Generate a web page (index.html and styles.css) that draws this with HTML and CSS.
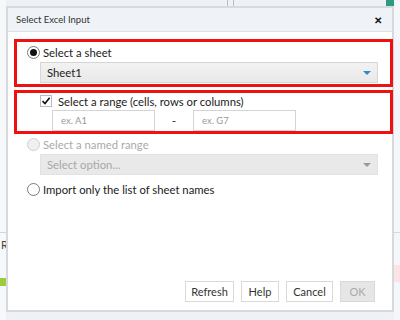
FILE: index.html
```html
<!DOCTYPE html>
<html>
<head>
<meta charset="utf-8">
<link rel="stylesheet" href="styles.css">
</head>
<body>
<div class="backdrop">
  <div class="bg-lines"></div>
  <div class="bg-teal"></div>
  <div class="bg-left">
    <div class="bg-sep"></div>
    <div class="bg-r">R</div>
    <div class="bg-green"></div>
  </div>
  <div class="bg-right">
    <div class="bg-sep"></div>
    <div class="bg-pink"></div>
  </div>
</div>
<div class="dialog">
  <div class="header">
    <span class="title">Select Excel Input</span>
    <span class="close">&#x2715;</span>
  </div>
  <div class="content">
    <div class="hl hl-sheet">
      <label class="opt">
        <span class="radio checked"></span>
        <span class="lbl">Select a sheet</span>
      </label>
      <div class="select">
        <span>Sheet1</span>
        <span class="caret"></span>
      </div>
    </div>
    <div class="hl hl-range">
      <label class="opt">
        <span class="check">
          <svg width="10" height="10" viewBox="0 0 10 10"><path d="M1.5 5.2 L4 7.6 L8.6 1.8" fill="none" stroke="#111" stroke-width="1.6"/></svg>
        </span>
        <span class="lbl">Select a range (cells, rows or columns)</span>
      </label>
      <div class="range">
        <div class="input">ex. A1</div>
        <span class="dash">-</span>
        <div class="input">ex. G7</div>
      </div>
    </div>
    <div class="plain">
      <label class="opt disabled">
        <span class="radio"></span>
        <span class="lbl">Select a named range</span>
      </label>
      <div class="select disabled">
        <span>Select option...</span>
        <span class="caret"></span>
      </div>
      <label class="opt opt-last">
        <span class="radio"></span>
        <span class="lbl">Import only the list of sheet names</span>
      </label>
    </div>
    <div class="spacer"></div>
    <div class="buttons">
      <button class="btn btn-refresh">Refresh</button>
      <button class="btn btn-help">Help</button>
      <button class="btn btn-cancel">Cancel</button>
      <button class="btn btn-disabled">OK</button>
    </div>
  </div>
</div>
</body>
</html>
```

FILE: styles.css
```css
html, body {
  margin: 0;
  padding: 0;
}
body {
  width: 400px;
  height: 320px;
  background: #eef1f5;
  font-family: "Lato", "Open Sans", sans-serif;
  color: #222;
  position: relative;
  overflow: hidden;
}
.backdrop {
  position: absolute;
  inset: 0;
}
.bg-lines {
  position: absolute;
  left: 227px;
  top: 0;
  width: 5px;
  height: 6px;
  border-left: 1px solid #b9bdc2;
  border-right: 1px solid #b9bdc2;
}
.bg-teal {
  position: absolute;
  left: 386px;
  top: 0;
  width: 14px;
  height: 7px;
  background: #2e9a82;
}
.bg-left {
  position: absolute;
  left: 0;
  top: 0;
  width: 6px;
  height: 320px;
  background: #f7f8fa;
}
.bg-left .bg-sep {
  position: absolute;
  top: 232px;
  left: 0;
  width: 6px;
  border-top: 1px solid #cfd6e0;
}
.bg-r {
  position: absolute;
  top: 238px;
  left: 1px;
  font-size: 11px;
  color: #444;
}
.bg-green {
  position: absolute;
  top: 278px;
  left: 0;
  width: 6px;
  height: 8px;
  background: #9ccc3c;
}
.bg-right {
  position: absolute;
  right: 0;
  top: 0;
  width: 6px;
  height: 320px;
  background: #f4f6f9;
}
.bg-right .bg-sep {
  position: absolute;
  top: 232px;
  left: 0;
  width: 6px;
  border-top: 1px solid #d3dae3;
}
.bg-pink {
  position: absolute;
  top: 265px;
  left: 0;
  width: 6px;
  height: 17px;
  background: #fbe3e6;
}
.dialog {
  position: absolute;
  left: 6px;
  top: 6px;
  width: 384px;
  height: 302px;
  border: 2px solid #d6d9dd;
  background: #fff;
  display: flex;
  flex-direction: column;
}
.header {
  height: 23px;
  background: #eff2f6;
  border-bottom: 1px solid #dde1e6;
  display: flex;
  align-items: center;
  justify-content: space-between;
  padding: 0 8px 0 8px;
}
.title {
  font-size: 9.5px;
  color: #333;
}
.close {
  font-size: 10px;
  font-weight: bold;
  color: #111;
  margin-right: 2px;
}
.content {
  flex: 1;
  display: flex;
  flex-direction: column;
  padding: 7px 0 8px 6px;
}
.hl {
  border: 3px solid #ee1111;
  margin-right: -1px;
}
.hl-sheet {
  height: 42px;
  padding: 0 0 0 10px;
}
.hl-range {
  margin-top: 3px;
  height: 38px;
  padding: 0 0 0 23px;
}
.opt {
  display: flex;
  align-items: center;
  gap: 3px;
  font-size: 11.3px;
  height: 20px;
}
.hl-range .opt {
  gap: 6px;
  margin-top: -2px;
}
.radio {
  width: 13px;
  height: 13px;
  border: 1px solid #7a7a7a;
  border-radius: 50%;
  box-sizing: border-box;
  display: inline-flex;
  align-items: center;
  justify-content: center;
  background: #fff;
}
.radio.checked::after {
  content: "";
  width: 7px;
  height: 7px;
  border-radius: 50%;
  background: #111;
}
.select {
  margin-left: 13px;
  margin-right: 12px;
  height: 21px;
  box-sizing: border-box;
  border: 1px solid #d6d6d6;
  background: linear-gradient(#f2f2f2, #e9e9e9);
  display: flex;
  align-items: center;
  justify-content: space-between;
  padding: 0 6px;
  font-size: 11.3px;
  color: #222;
}
.caret {
  width: 0;
  height: 0;
  border-left: 4px solid transparent;
  border-right: 4px solid transparent;
  border-top: 4px solid #2b8ad1;
}
.check {
  width: 12px;
  height: 12px;
  border: 1px solid #bbb;
  box-sizing: border-box;
  display: inline-flex;
  align-items: center;
  justify-content: center;
  background: #fff;
}
.range {
  display: flex;
  align-items: center;
  margin-top: -1px;
  margin-left: 12px;
}
.input {
  width: 103px;
  height: 21px;
  box-sizing: border-box;
  border: 1px solid #d4d4d4;
  font-size: 9.5px;
  color: #999;
  padding-left: 8px;
  display: flex;
  align-items: center;
}
.dash {
  width: 38px;
  text-align: center;
  font-size: 12px;
  color: #333;
}
.plain {
  padding-left: 13px;
  margin-top: 0;
}
.opt.disabled {
  color: #aaa;
}
.opt.disabled .radio {
  border-color: #cfcfcf;
  background: #f0f0f0;
}
.select.disabled {
  background: #e9e9e9;
  border-color: #e2e2e2;
  color: #a8a8a8;
  margin-top: 0;
  margin-right: 14px;
}
.select.disabled .caret {
  border-top-color: #999;
}
.opt-last {
  margin-top: 4px;
}
.spacer {
  flex: 1;
}
.buttons {
  display: flex;
  justify-content: flex-end;
  gap: 7px;
  padding-right: 17px;
}
.btn {
  height: 21px;
  padding: 0;
  font-family: "Lato", "Open Sans", sans-serif;
  font-size: 11px;
  color: #333;
  background: #fff;
  border: 1px solid #d9d9d9;
  border-radius: 0;
}
.btn-refresh { width: 49px; }
.btn-help { width: 38px; }
.btn-cancel { width: 47px; }
.btn-disabled {
  background: #e6e6e6;
  color: #aaa;
  width: 35px;
}
```
